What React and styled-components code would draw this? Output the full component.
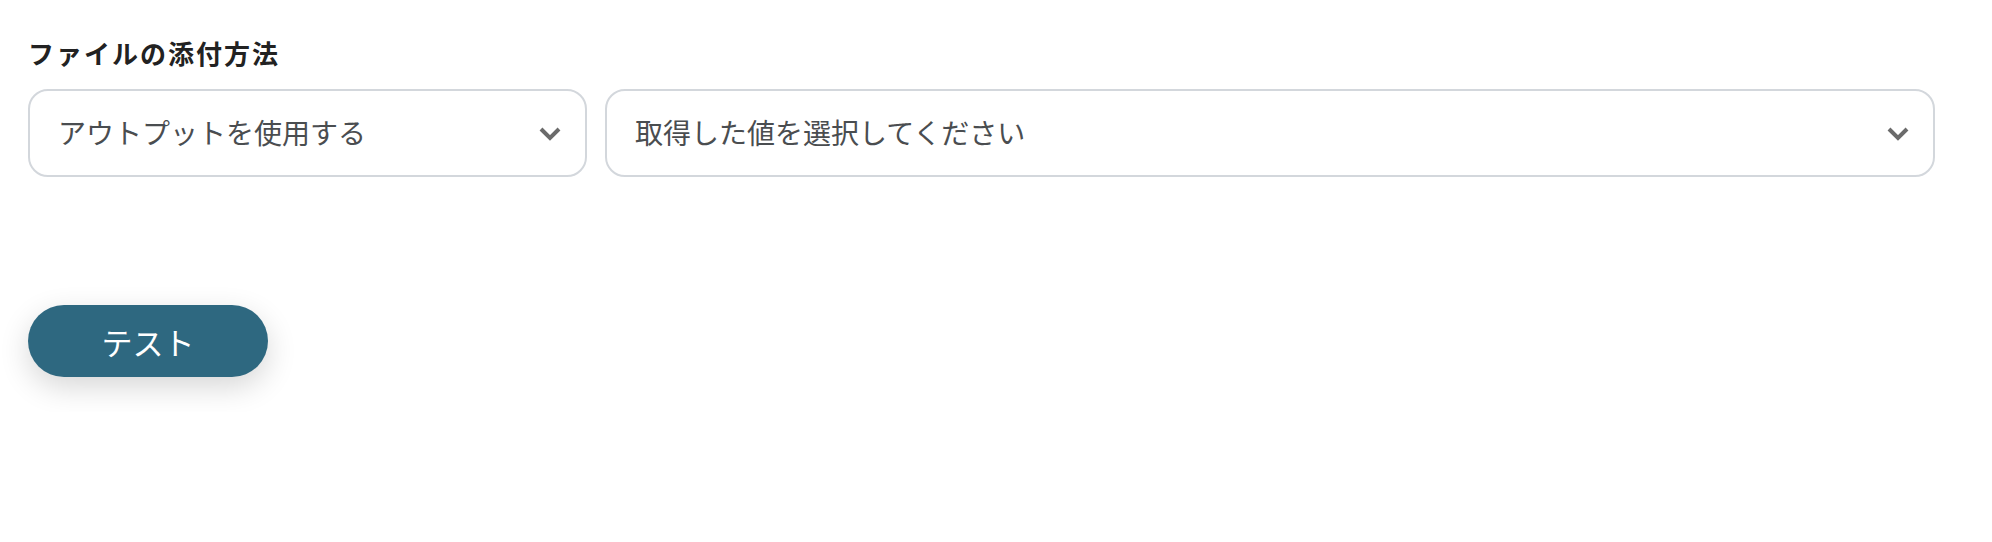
import React from "react";
import styled, { createGlobalStyle } from "styled-components";

const GlobalStyle = createGlobalStyle`
    body {
        margin: 0;
        background: #ffffff;
        font-family: "Noto Sans CJK JP", "Noto Sans", sans-serif;
    }
`;

const Page = styled.div`
    padding: 35px 28px;
`;

const Label = styled.h3`
    margin: 0 0 18px;
    font-size: 26px;
    line-height: 36px;
    font-weight: 700;
    letter-spacing: 2px;
    color: #222222;
`;

const Row = styled.div`
    display: flex;
    gap: 18px;
    width: 1907px;
`;

const Select = styled.div`
    box-sizing: border-box;
    flex: ${({ $grow }) => ($grow ? "1 1 auto" : "0 0 559px")};
    height: 88px;
    display: flex;
    align-items: center;
    justify-content: space-between;
    padding: 0 24px 3px 28px;
    border: 2px solid #d3d7dc;
    border-radius: 20px;
    background: #fff;
`;

const SelectText = styled.span`
    font-size: 28px;
    color: #4a4d50;
`;

const Chevron = styled.svg`
    width: 22px;
    height: 14px;
    flex: none;
    margin-top: 5px;
`;

const Button = styled.button`
    margin-top: 128px;
    width: 240px;
    height: 72px;
    border: none;
    border-radius: 36px;
    background: #2e6880;
    color: #ffffff;
    font-family: inherit;
    font-size: 31px;
    box-shadow: 0 10px 30px rgba(0, 0, 0, 0.16);
    cursor: pointer;
`;

const ArrowDown = () => (
    <Chevron viewBox="0 0 22 14">
        <polyline
            points="2,2 11,11 20,2"
            fill="none"
            stroke="#6b6b6b"
            strokeWidth="4"
        />
    </Chevron>
);

export default function App() {
    return (
        <>
            <GlobalStyle />
            <Page>
                <Label>ファイルの添付方法</Label>
                <Row>
                    <Select>
                        <SelectText>アウトプットを使用する</SelectText>
                        <ArrowDown />
                    </Select>
                    <Select $grow>
                        <SelectText>取得した値を選択してください</SelectText>
                        <ArrowDown />
                    </Select>
                </Row>
                <Button>テスト</Button>
            </Page>
        </>
    );
}
